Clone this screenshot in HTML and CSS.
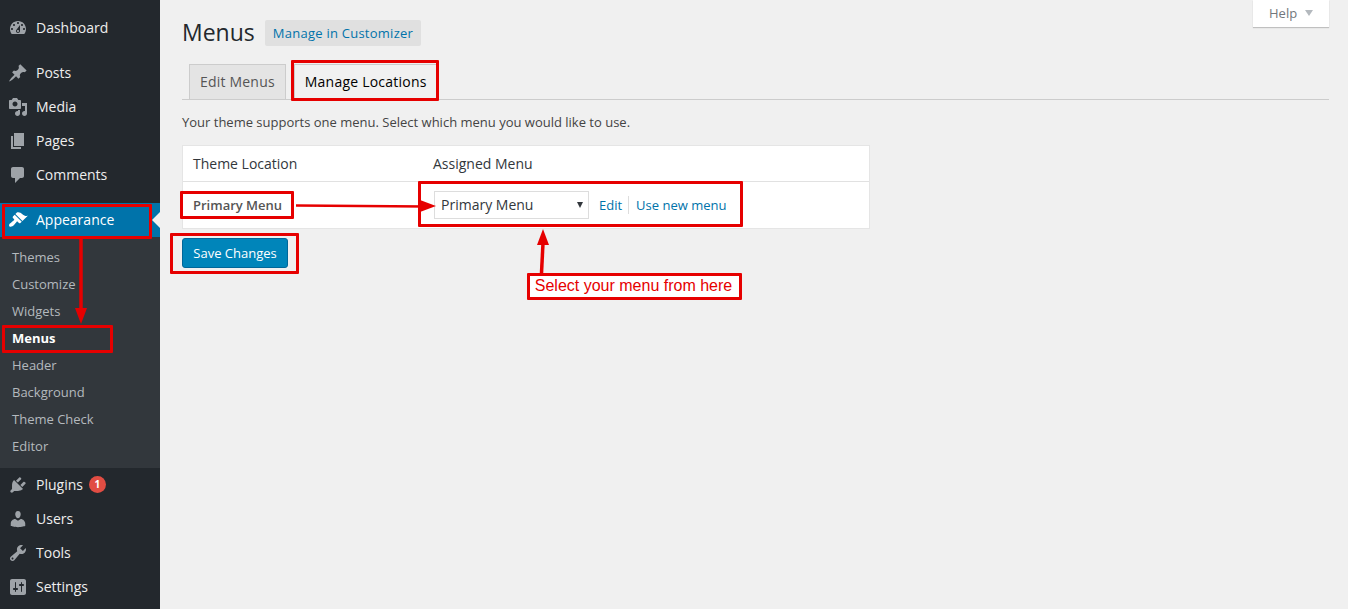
FILE: index.html
```html
<!DOCTYPE html>
<html lang="en">
<head>
<meta charset="utf-8">
<title>Menus</title>
<link rel="stylesheet" href="styles.css">
</head>
<body>
<div class="app">
  <nav class="sidebar">
    <ul class="menu">
      <li class="item"><svg class="icon" viewBox="0 0 20 20"><path d="M3.76 16h12.48c1.1-1.37 1.76-3.11 1.76-5 0-4.42-3.58-8-8-8s-8 3.58-8 8c0 1.89.66 3.63 1.76 5zM10 4c.55 0 1 .45 1 1s-.45 1-1 1-1-.45-1-1 .45-1 1-1zM6 6c.55 0 1 .45 1 1s-.45 1-1 1-1-.45-1-1 .45-1 1-1zm8 0c.55 0 1 .45 1 1s-.45 1-1 1-1-.45-1-1 .45-1 1-1zm-5.37 5.55L12 7v6c0 1.1-.9 2-2 2s-2-.9-2-2c0-.57.24-1.08.63-1.45zM4 10c.55 0 1 .45 1 1s-.45 1-1 1-1-.45-1-1 .45-1 1-1zm12 0c.55 0 1 .45 1 1s-.45 1-1 1-1-.45-1-1 .45-1 1-1zm-5 3c0-.55-.45-1-1-1s-1 .45-1 1 .45 1 1 1 1-.45 1-1z"/></svg>Dashboard</li>
      <li class="sep"></li>
      <li class="item"><svg class="icon" viewBox="0 0 20 20"><path d="M10.44 3.02l1.82-1.82 6.36 6.35-1.83 1.82c-1.05-.68-2.48-.57-3.41.36l-.75.75c-.92.93-1.04 2.35-.35 3.41l-1.83 1.82-2.41-2.41-2.8 2.79c-.42.42-3.38 2.71-3.8 2.29s1.86-3.39 2.28-3.81l2.79-2.79L4.1 9.36l1.83-1.82c1.05.69 2.48.57 3.4-.36l.75-.75c.93-.92 1.05-2.35.36-3.41z"/></svg>Posts</li>
      <li class="item"><svg class="icon" viewBox="0 0 20 20"><path d="M13 11V4c0-.55-.45-1-1-1h-1.67L9 1H5L3.67 3H2c-.55 0-1 .45-1 1v7c0 .55.45 1 1 1h10c.55 0 1-.45 1-1zM7 4.5c1.38 0 2.5 1.12 2.5 2.5S8.38 9.5 7 9.5 4.5 8.38 4.5 7 5.62 4.5 7 4.5zM14 6h5v10.5c0 1.38-1.12 2.5-2.5 2.5S14 17.88 14 16.5s1.12-2.5 2.5-2.5c.17 0 .34.02.5.05V9h-3V6zm-4 8.05V13h2v3.5c0 1.38-1.12 2.5-2.5 2.5S7 17.88 7 16.5 8.12 14 9.5 14c.17 0 .34.02.5.05z"/></svg>Media</li>
      <li class="item"><svg class="icon" viewBox="0 0 20 20"><path d="M6 15V2h10v13H6zm-1 1h8v2H3V5h2v11z"/></svg>Pages</li>
      <li class="item"><svg class="icon" viewBox="0 0 20 20"><path d="M5 2h9c1.1 0 2 .9 2 2v7c0 1.1-.9 2-2 2h-2l-5 5v-5H5c-1.1 0-2-.9-2-2V4c0-1.1.9-2 2-2z"/></svg>Comments</li>
      <li class="sep"></li>
      <li class="item current"><svg class="icon" viewBox="0 0 20 20"><path d="M14.48 11.06L7.41 3.99l1.5-1.5c.5-.56 2.3-.47 3.51.32 1.21.8 1.43 1.28 2.91 2.1 1.18.64 2.45 1.26 4.45.85zm-.71.71L6.7 4.7 4.93 6.47c-.39.39-.39 1.02 0 1.41l1.06 1.06c.39.39.39 1.03 0 1.42-.6.6-1.43 1.11-2.21 1.69-.35.26-.7.53-1.01.84C1.43 13.23.4 15.3 1.49 16.39c1.1 1.1 3.16.07 4.5-1.28.31-.31.58-.66.84-1.01.58-.78 1.09-1.61 1.69-2.21.39-.39 1.02-.39 1.41 0l1.06 1.06c.39.39 1.02.39 1.41 0z"/></svg>Appearance</li>
      <li>
        <ul class="submenu">
          <li class="subitem">Themes</li>
          <li class="subitem">Customize</li>
          <li class="subitem">Widgets</li>
          <li class="subitem active">Menus</li>
          <li class="subitem">Header</li>
          <li class="subitem">Background</li>
          <li class="subitem">Theme Check</li>
          <li class="subitem">Editor</li>
        </ul>
      </li>
      <li class="item"><svg class="icon" viewBox="0 0 20 20"><path d="M13.11 4.36L9.87 7.6 8 5.73l3.24-3.24c.35-.34 1.05-.2 1.56.32.52.51.66 1.21.31 1.55zm-8 1.77l.91-1.12 9.01 9.01-1.19.84c-.71.71-2.63 1.16-3.82 1.16H6.14L4.9 17.26c-.59.59-1.54.59-2.12 0-.59-.58-.59-1.53 0-2.12l1.24-1.24v-3.88c0-1.13.4-3.19 1.09-3.89zm7.26 3.97l3.24-3.24c.34-.35 1.04-.21 1.55.31.52.51.66 1.21.31 1.55l-3.24 3.25z"/></svg>Plugins<span class="badge">1</span></li>
      <li class="item"><svg class="icon" viewBox="0 0 20 20"><path d="M10 9.25c-2.27 0-2.73-3.44-2.73-3.44C7 4.02 7.82 2 9.97 2c2.16 0 2.98 2.02 2.71 3.81 0 0-.41 3.44-2.68 3.44zm0 2.57L12.72 10c2.39 0 4.52 2.33 4.52 4.53v2.49s-3.65 1.13-7.24 1.13c-3.65 0-7.24-1.13-7.24-1.13v-2.49c0-2.25 1.94-4.48 4.47-4.48z"/></svg>Users</li>
      <li class="item"><svg class="icon" viewBox="0 0 20 20"><path d="M16.68 9.77c-1.34 1.34-3.3 1.67-4.95.99l-5.41 6.52c-.99.99-2.59.99-3.58 0s-.99-2.59 0-3.57l6.52-5.42c-.68-1.65-.35-3.61.99-4.95 1.28-1.28 3.12-1.62 4.72-1.06l-2.89 2.89 2.82 2.82 2.86-2.87c.53 1.58.18 3.39-1.08 4.65zM3.81 16.21c.4.39 1.04.39 1.43 0 .4-.4.4-1.04 0-1.43-.39-.4-1.03-.4-1.43 0-.39.39-.39 1.03 0 1.43z"/></svg>Tools</li>
      <li class="item"><svg class="icon" viewBox="0 0 20 20"><path d="M18 16V4c0-1.1-.9-2-2-2H4c-1.1 0-2 .9-2 2v12c0 1.1.9 2 2 2h12c1.1 0 2-.9 2-2zM8 11h1c.55 0 1 .45 1 1s-.45 1-1 1H8v1.5c0 .28-.22.5-.5.5s-.5-.22-.5-.5V13H6c-.55 0-1-.45-1-1s.45-1 1-1h1V5.5c0-.28.22-.5.5-.5s.5.22.5.5V11zm5-2h-1c-.55 0-1-.45-1-1s.45-1 1-1h1V5.5c0-.28.22-.5.5-.5s.5.22.5.5V7h1c.55 0 1 .45 1 1s-.45 1-1 1h-1v5.5c0 .28-.22.5-.5.5s-.5-.22-.5-.5V9z"/></svg>Settings</li>
    </ul>
  </nav>
  <main class="content">
    <div class="help-row"><div class="help">Help<span class="help-arrow"></span></div></div>
    <header class="title-row">
      <h1 class="title">Menus</h1>
      <a class="title-action">Manage in Customizer</a>
    </header>
    <div class="tabs">
      <a class="tab">Edit Menus</a>
      <a class="tab tab-active">Manage Locations</a>
    </div>
    <p class="intro">Your theme supports one menu. Select which menu you would like to use.</p>
    <table class="locations">
      <thead>
        <tr><th class="col-location">Theme Location</th><th>Assigned Menu</th></tr>
      </thead>
      <tbody>
        <tr>
          <td class="location-name">Primary Menu</td>
          <td class="assign">
            <span class="select-wrap"><select class="select"><option>Primary Menu</option></select></span>
            <span class="links"><a class="link link-edit">Edit</a><a class="link">Use new menu</a></span>
          </td>
        </tr>
      </tbody>
    </table>
    <button class="save" type="button">Save Changes</button>
  </main>
</div>

<div class="mark mark-appearance"></div>
<div class="mark mark-menus"></div>
<div class="mark mark-tab"></div>
<div class="mark mark-primary"></div>
<div class="mark mark-select"></div>
<div class="mark mark-save"></div>
<div class="mark mark-label">Select your menu from here</div>
<svg class="arrows" viewBox="0 0 1348 609">
  <path class="shaft" d="M81 239V312"/>
  <path class="head" d="M75 308H87L81 324Z"/>
  <path class="shaft shaft-thin" d="M296 205.500L425 206.500"/>
  <path class="head" d="M420 200L436 206L420 212Z"/>
  <path class="shaft" d="M541.500 273L543 243"/>
  <path class="head" d="M537 245L543 229L549 245Z"/>
</svg>
</body>
</html>
```
FILE: styles.css
```css
* { box-sizing: border-box; }
html, body { margin: 0; height: 100%; overflow: hidden; }
body {
  position: relative;
  background: #f0f0f0;
  color: #444;
  font-family: "Open Sans", sans-serif;
  font-size: 13px;
}
ul { list-style: none; margin: 0; padding: 0; }
a { text-decoration: none; }

.app { display: flex; height: 609px; }

.sidebar { flex: 0 0 160px; background: #23282d; padding-top: 11px; }
.item {
  position: relative;
  display: flex;
  align-items: center;
  height: 34px;
  padding: 0 0 2px 8px;
  color: #eee;
  font-size: 14px;
}
.icon { width: 20px; height: 20px; margin: 2px 8px 0 0; fill: #9ea3a8; flex: none; }
.sep { height: 11px; }
.current { background: #0073aa; color: #fff; }
.current .icon { fill: #fff; }
.current::after {
  content: "";
  position: absolute;
  right: 0;
  top: 9px;
  border: 8px solid transparent;
  border-right-color: #f0f0f0;
  border-left-width: 0;
}
.submenu { background: #32373c; padding: 7px 0 8px; }
.subitem {
  height: 27px;
  line-height: 27px;
  padding-left: 12px;
  color: #b4b9be;
  font-size: 13px;
}
.active { color: #fff; font-weight: 700; }
.badge {
  width: 17px;
  height: 17px;
  margin-left: 6px;
  border-radius: 50%;
  background: #e14d43;
  color: #fff;
  font-size: 10px;
  font-weight: 700;
  line-height: 17px;
  text-align: center;
}

.content { position: relative; flex: 1; padding: 0 19px 0 22px; }
.help-row { position: absolute; top: 0; right: 19px; }
.help {
  display: flex;
  align-items: center;
  width: 76px;
  height: 27px;
  padding: 0 0 2px 16px;
  background: #fff;
  color: #72777c;
  box-shadow: 0 1px 1px rgba(0, 0, 0, .2);
}
.help-arrow {
  margin-left: 8px;
  border: 4px solid transparent;
  border-top: 6px solid #b4b9be;
  border-bottom: 0;
}

.title-row { display: flex; align-items: center; height: 26px; margin-top: 20px; }
.title { margin: 0; padding-bottom: 2px; color: #23282d; font-size: 23px; font-weight: 400; line-height: 26px; }
.title-action {
  margin-left: 10px;
  padding: 0 8px;
  height: 26px;
  line-height: 26px;
  background: #e0e0e0;
  border-radius: 2px;
  color: #0073aa;
  font-size: 13px;
  font-weight: 500;
  letter-spacing: .25px;
}

.tabs {
  display: flex;
  gap: 8px;
  height: 36px;
  margin-top: 18px;
  padding-left: 7px;
  border-bottom: 1px solid #ccc;
}
.tab {
  height: 36px;
  padding: 0 10px;
  border: 1px solid #ccc;
  background: #e4e4e4;
  color: #555;
  font-size: 14px;
  letter-spacing: .2px;
  line-height: 34px;
}
.tab-active {
  background: #f1f1f1;
  border-bottom-color: #f1f1f1;
  color: #000;
  font-weight: 500;
  letter-spacing: .22px;
}

.intro { margin: 13px 0 14px; font-size: 13px; line-height: 18px; color: #444; }

.locations {
  width: 688px;
  height: 84px;
  border: 1px solid #e5e5e5;
  border-spacing: 0;
  background: #fff;
  table-layout: fixed;
}
.locations th {
  height: 36px;
  padding: 0 10px;
  border-bottom: 1px solid #e1e1e1;
  color: #32373c;
  font-size: 14px;
  font-weight: 400;
  text-align: left;
}
.locations th.col-location { width: 240px; }
.locations td { padding: 0 10px; }
.location-name { color: #555; font-size: 13px; font-weight: 600; }
.assign { display: flex; align-items: center; height: 46px; padding: 0 10px 1px 11px !important; }
.select-wrap { position: relative; display: block; width: 155px; height: 28px; }
.select-wrap::after {
  content: "";
  position: absolute;
  right: 6px;
  top: 11px;
  border: 3.500px solid transparent;
  border-top: 6px solid #32373c;
  border-bottom: 0;
}
.select {
  display: block;
  width: 100%;
  height: 100%;
  padding: 0 6px;
  border: 1px solid #ddd;
  border-radius: 0;
  appearance: none;
  background: #fff;
  color: #32373c;
  font-family: "Open Sans", sans-serif;
  font-size: 14px;
}
.links { display: flex; align-items: center; margin-left: 10px; }
.link { color: #0073aa; font-size: 13px; line-height: 18px; }
.link-edit { padding-right: 6px; margin-right: 7px; border-right: 1px solid #ddd; }

.save {
  display: block;
  width: 106px;
  height: 30px;
  margin-top: 9px;
  padding: 0;
  border: 1px solid #006799;
  border-radius: 3px;
  background: #0085ba;
  color: #fff;
  font-family: "Open Sans", sans-serif;
  font-size: 13px;
}

.mark { position: absolute; border: 3px solid #e60000; border-radius: 1px; }
.mark-appearance { left: 2px; top: 204px; width: 150px; height: 35px; }
.mark-menus { left: 2px; top: 325px; width: 111px; height: 28px; }
.mark-tab { left: 291px; top: 60px; width: 148px; height: 41px; }
.mark-primary { left: 180px; top: 191px; width: 114px; height: 28px; }
.mark-select { left: 418px; top: 181px; width: 325px; height: 46px; }
.mark-save { left: 170px; top: 233px; width: 129px; height: 41px; }
.mark-label {
  left: 527px;
  top: 273px;
  width: 215px;
  height: 27px;
  padding-right: 2px;
  background: #fff;
  color: #e60000;
  font-family: "Liberation Sans", sans-serif;
  font-size: 16px;
  line-height: 20px;
  text-align: center;
}
.arrows { position: absolute; left: 0; top: 0; width: 1348px; height: 609px; pointer-events: none; }
.shaft { fill: none; stroke: #e60000; stroke-width: 3.500; }
.shaft-thin { stroke-width: 2.500; }
.head { fill: #e60000; }
```
